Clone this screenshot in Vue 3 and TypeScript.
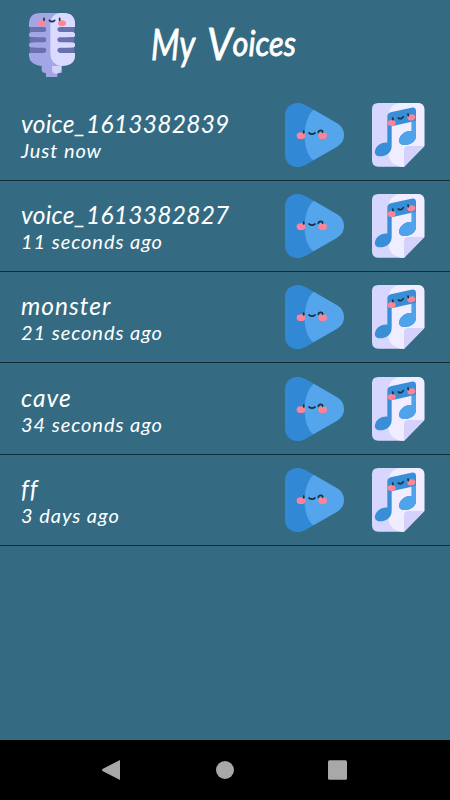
<script setup lang="ts">
interface Voice {
  name: string
  age: string
  kind: string
}

const voices: Voice[] = [
  { name: 'voice_1613382839', age: 'Just now', kind: 'long' },
  { name: 'voice_1613382827', age: '11 seconds ago', kind: 'long' },
  { name: 'monster', age: '21 seconds ago', kind: 'short' },
  { name: 'cave', age: '34 seconds ago', kind: 'short' },
  { name: 'ff', age: '3 days ago', kind: 'short' },
]
</script>

<template>
  <div class="screen">
    <header class="header">
      <svg class="mic" viewBox="0 0 192 240">
        <path d="M27 66V58Q27 24 62 24H130Q165 24 165 58V66H145V81H156Q165 81 165 89T156 97H145V112H156Q165 112 165 120T156 128H145V144H165V151Q165 181 126 183V202Q126 205 112 205V216H78V205Q65 203 65 196V183Q27 179 27 151V144H45V128H35Q27 128 27 120T35 112H45V97H35Q27 97 27 89T35 81H45V66Z" fill="#a3a6e5" />
        <path d="M119 24H130Q165 24 165 58V66H145V81H156Q165 81 165 89T156 97H145V112H156Q165 112 165 120T156 128H145V144H165V151Q165 183 123 183Q91 178 91 145V58Q91 29 119 24Z" fill="#dad9ff" />
        <path d="M96 183H123V194Q121 206 106 206Q96 204 96 194Z" fill="#d2d2fb" />
        <path d="M29 66H73Q79 67 79 73T73 81H29ZM29 97H73Q79 98 79 104T73 112H29ZM29 128H73Q79 129 79 135T73 144H29ZM163 66H119Q112 67 112 73T119 81H163ZM163 97H119Q112 98 112 104T119 112H163ZM163 128H119Q112 129 112 135T119 144H163Z" fill="#6970ae" />
        <ellipse cx="65" cy="55" rx="12" ry="9" fill="#ff8795" />
        <ellipse cx="126" cy="55" rx="12" ry="9" fill="#ff8795" />
        <path d="M72 40V46M119 40V46M88 46Q96 54 104 46" class="face" />
      </svg>
      <svg class="title" viewBox="140 0 220 90" role="heading" aria-level="1">
        <text class="title-text word" x="151" y="60" textLength="44" lengthAdjust="spacingAndGlyphs">My</text>
        <text class="title-text" x="207" y="60" textLength="89" lengthAdjust="spacingAndGlyphs"><tspan class="capital">V</tspan><tspan class="small" dy="-4">oices</tspan></text>
      </svg>
    </header>

    <main class="list">
      <article v-for="voice in voices" :key="voice.name" class="row">
        <div class="info">
          <div class="name" :class="voice.kind">{{ voice.name }}</div>
          <div class="age">{{ voice.age }}</div>
        </div>
        <svg class="play" viewBox="0 0 240 240">
          <path d="M30 60C30 31 62 14 91 30L186 85Q207 98 207 120T186 155L91 210C62 226 30 209 30 180Z" fill="#3189d6" />
          <path d="M116 44L186 85Q207 98 207 120T186 155L115 196C80 169 80 76 116 44Z" fill="#55a5ed" />
          <ellipse cx="78" cy="122" rx="13" ry="10" fill="#fd8398" />
          <ellipse cx="143" cy="122" rx="13" ry="10" fill="#fd8398" />
          <path d="M86 108V114M102 114Q111 121 120 114M130 112Q131 106 137 106T143 112" class="face" />
        </svg>
        <svg class="song" viewBox="0 0 240 240">
          <path d="M55 24H173Q193 24 193 44V153L132 215H55Q36 215 36 196V43Q36 24 55 24Z" fill="#d7d6ff" />
          <path d="M118 24H173Q193 24 193 44V153L132 215H123Q84 209 84 165V72Q84 30 118 24Z" fill="#efedff" />
          <path d="M132 215V166Q132 153 146 153H193Z" fill="#d4d2fc" />
          <path d="M82 65Q82 55 92 52L154 38Q168 36 168 48V124C168 139 151 150 136 150C121 151 115 143 118 132C122 116 139 106 155 108V80L95 94V153C95 171 80 184 61 184C46 184 42 174 46 164C51 150 66 141 82 143Z" fill="#398fd7" />
          <path d="M155 80L168 77V124C168 139 151 150 136 150C121 151 115 143 118 132C122 116 139 106 155 108Z" fill="#50a2ea" />
          <ellipse cx="95" cy="84" rx="12" ry="9" transform="rotate(-12 95 84)" fill="#ff8497" />
          <ellipse cx="154" cy="67" rx="12" ry="9" transform="rotate(-12 154 67)" fill="#ff8497" />
          <path d="M98 69L99 74M144 57L145 62M115 69Q124 75 130 65" class="face" />
        </svg>
      </article>
    </main>

    <nav class="navigation">
      <svg class="nav-icon" viewBox="0 0 24 24"><path d="M20 2V22L2.5 13Q1.5 12 2.5 11Z" fill="#a8a8a8" /></svg>
      <svg class="nav-icon" viewBox="0 0 24 24"><circle cx="12" cy="12" r="9" fill="#a8a8a8" /></svg>
      <svg class="nav-icon" viewBox="0 0 24 24"><rect x="2" y="2.3" width="19" height="19.5" rx="1.5" fill="#a8a8a8" /></svg>
    </nav>
  </div>
</template>

<style>
body {
  margin: 0;
  background: #346b82;
}
</style>

<style scoped>
.screen {
  width: 450px;
  height: 800px;
  display: flex;
  flex-direction: column;
  overflow: hidden;
  background: #346b82;
  color: #fff;
  font-family: Lato, "Liberation Sans", sans-serif;
  font-style: italic;
}
.header {
  height: 89.8px;
  flex: none;
  display: flex;
  align-items: flex-start;
}
.mic {
  width: 64px;
  height: 80px;
  margin: 5px 56px 0 20px;
}
.title {
  width: 220px;
  height: 90px;
  overflow: visible;
}
.title-text {
  fill: #fff;
  stroke: #fff;
  stroke-width: 0.8px;
  font-weight: 400;
}
.word {
  font-size: 42px;
}
.capital {
  font-size: 45px;
}
.small {
  font-size: 34px;
}
.face {
  fill: none;
  stroke: #18313e;
  stroke-width: 5px;
  stroke-linecap: round;
}
.list {
  flex: 1;
}
.row {
  height: 91.2px;
  box-sizing: border-box;
  display: flex;
  align-items: flex-start;
  padding-top: 5.2px;
  border-bottom: 1px solid #142c36;
}
.info {
  width: 254px;
  padding: 14px 0 0 21px;
  white-space: nowrap;
}
.name {
  font-size: 24.5px;
  line-height: 29px;
}
.name.long {
  letter-spacing: 0.27px;
}
.name.short {
  letter-spacing: 1px;
}
.age {
  font-size: 20px;
  line-height: 25.6px;
  letter-spacing: 0.95px;
}
.play,
.song {
  width: 80px;
  height: 80px;
  flex: none;
}
.song {
  margin-left: 5px;
}
.navigation {
  height: 60px;
  display: flex;
  align-items: center;
  justify-content: center;
  gap: 89px;
  background: #000;
}
.nav-icon {
  width: 24px;
  height: 24px;
}
</style>
